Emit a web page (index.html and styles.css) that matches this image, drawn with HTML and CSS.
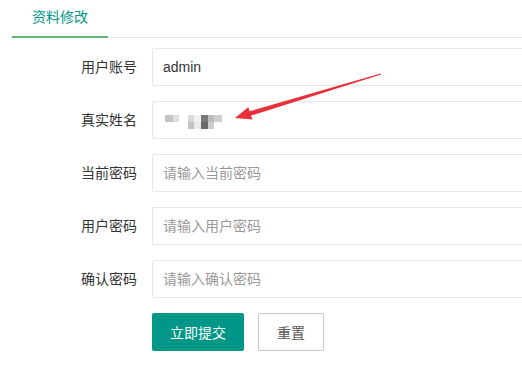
FILE: index.html
```html
<!DOCTYPE html>
<html lang="zh-CN">
<head>
  <meta charset="UTF-8">
  <title>资料修改</title>
  <link rel="stylesheet" href="styles.css">
</head>
<body>

  <div class="page">
    <!-- 标签页 -->
    <ul class="tab-title">
      <li class="this">资料修改</li>
    </ul>

    <!-- 表单 -->
    <form class="form">
      <div class="form-item">
        <label class="form-label">用户账号</label>
        <div class="input-block">
          <input type="text" class="input" value="admin">
        </div>
      </div>
      <div class="form-item">
        <label class="form-label">真实姓名</label>
        <div class="input-block">
          <div class="input mosaic-box">
            <svg class="mosaic" width="60" height="14" viewBox="0 0 60 14">
              <rect x="0" y="0" width="8" height="7" fill="#c4c4c4"/>
              <rect x="8" y="0" width="6" height="7" fill="#dedede"/>
              <rect x="23" y="0" width="6" height="7" fill="#dadada"/>
              <rect x="29" y="0" width="7" height="7" fill="#f2f2f2"/>
              <rect x="36" y="0" width="7" height="7" fill="#7a7a7a"/>
              <rect x="43" y="0" width="6" height="7" fill="#bdbdbd"/>
              <rect x="49" y="0" width="8" height="7" fill="#cfcfcf"/>
              <rect x="23" y="7" width="6" height="7" fill="#c2c2c2"/>
              <rect x="29" y="7" width="7" height="7" fill="#ececec"/>
              <rect x="36" y="7" width="7" height="7" fill="#6a6a6a"/>
              <rect x="43" y="7" width="6" height="7" fill="#cccccc"/>
            </svg>
          </div>
        </div>
      </div>
      <div class="form-item">
        <label class="form-label">当前密码</label>
        <div class="input-block">
          <input type="password" class="input" placeholder="请输入当前密码">
        </div>
      </div>
      <div class="form-item">
        <label class="form-label">用户密码</label>
        <div class="input-block">
          <input type="password" class="input" placeholder="请输入用户密码">
        </div>
      </div>
      <div class="form-item">
        <label class="form-label">确认密码</label>
        <div class="input-block">
          <input type="password" class="input" placeholder="请输入确认密码">
        </div>
      </div>
      <div class="form-item btn-row">
        <button type="button" class="btn">立即提交</button>
        <button type="reset" class="btn btn-reset">重置</button>
      </div>
    </form>
  </div>

  <!-- 标注箭头 -->
  <svg class="arrow" width="522" height="366" viewBox="0 0 522 366">
    <polygon fill="#e8303a" points="235,118 252.5,119.5 251,115.6 381,74.6 380.5,73.4 249.7,111.3 248.2,107.2"/>
  </svg>

</body>
</html>
```

FILE: styles.css
```css
* {
  box-sizing: border-box;
  margin: 0;
  padding: 0;
}

body {
  font-family: "Liberation Sans", "Noto Sans CJK SC", sans-serif;
  font-size: 14px;
  color: #333;
  background: #fff;
  position: relative;
  width: 522px;
  height: 366px;
  overflow: hidden;
}

.page {
  padding-left: 12px;
  overflow: hidden;
}

/* 标签页 */
.tab-title {
  list-style: none;
  height: 38px;
  border-bottom: 1px solid #e6e6e6;
  display: flex;
}

.tab-title li {
  position: relative;
  padding: 0 20px;
  line-height: 35px;
  color: #009688;
}

.tab-title li.this:after {
  content: "";
  position: absolute;
  left: 0;
  right: 0;
  bottom: -1px;
  height: 2px;
  background-color: #5fb878;
}

/* 表单 */
.form {
  margin-top: 10px;
  margin-left: 30px;
}

.form-item {
  display: flex;
  margin-bottom: 15px;
}

.form-label {
  width: 110px;
  padding: 9px 15px;
  line-height: 20px;
  text-align: right;
  flex-shrink: 0;
}

.input-block {
  width: 420px;
  flex-shrink: 0;
}

.input {
  display: block;
  width: 100%;
  height: 38px;
  padding-left: 10px;
  border: 1px solid #e6e6e6;
  border-radius: 2px;
  font-family: inherit;
  font-size: 14px;
  color: #333;
  background-color: #fff;
  outline: none;
}

.input::placeholder {
  color: #999;
}

.mosaic-box {
  display: flex;
  align-items: center;
  padding-left: 12px;
}

.mosaic {
  display: block;
  margin-top: 4px;
}

/* 按钮 */
.btn-row {
  padding-left: 110px;
  gap: 14px;
}

.btn {
  height: 38px;
  padding: 0 17px;
  border: 1px solid transparent;
  border-radius: 2px;
  font-family: inherit;
  font-size: 14px;
  color: #fff;
  background-color: #009688;
  cursor: pointer;
}

.btn-reset {
  padding: 0 18px;
  border-color: #c9c9c9;
  background-color: #fff;
  color: #555;
}

/* 标注 */
.arrow {
  position: absolute;
  left: 0;
  top: 0;
  pointer-events: none;
}
```
